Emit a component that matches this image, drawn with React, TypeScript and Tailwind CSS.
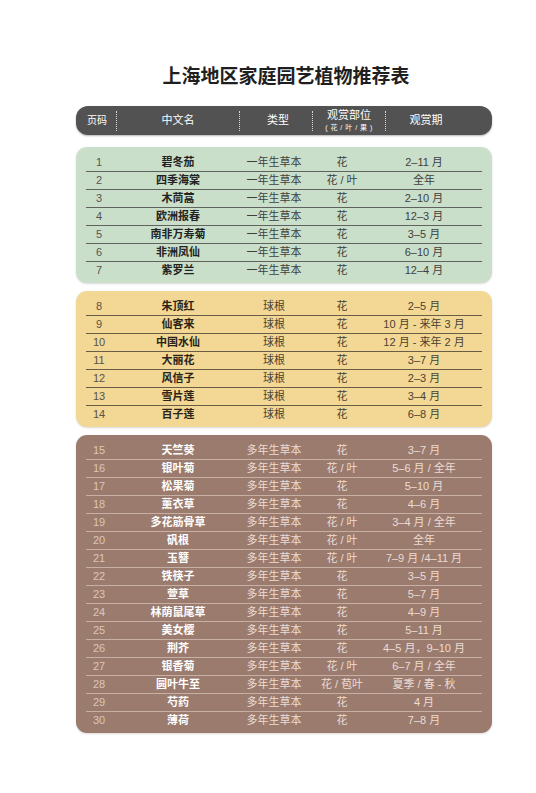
import React from "react";

type Row = [string, string, string, string, string];

const annuals: Row[] = [
  ["1", "碧冬茄", "一年生草本", "花", "2–11 月"],
  ["2", "四季海棠", "一年生草本", "花 / 叶", "全年"],
  ["3", "木茼蒿", "一年生草本", "花", "2–10 月"],
  ["4", "欧洲报春", "一年生草本", "花", "12–3 月"],
  ["5", "南非万寿菊", "一年生草本", "花", "3–5 月"],
  ["6", "非洲凤仙", "一年生草本", "花", "6–10 月"],
  ["7", "紫罗兰", "一年生草本", "花", "12–4 月"],
];

const bulbs: Row[] = [
  ["8", "朱顶红", "球根", "花", "2–5 月"],
  ["9", "仙客来", "球根", "花", "10 月 - 来年 3 月"],
  ["10", "中国水仙", "球根", "花", "12 月 - 来年 2 月"],
  ["11", "大丽花", "球根", "花", "3–7 月"],
  ["12", "风信子", "球根", "花", "2–3 月"],
  ["13", "雪片莲", "球根", "花", "3–4 月"],
  ["14", "百子莲", "球根", "花", "6–8 月"],
];

const perennials: Row[] = [
  ["15", "天竺葵", "多年生草本", "花", "3–7 月"],
  ["16", "银叶菊", "多年生草本", "花 / 叶", "5–6 月 / 全年"],
  ["17", "松果菊", "多年生草本", "花", "5–10 月"],
  ["18", "薰衣草", "多年生草本", "花", "4–6 月"],
  ["19", "多花筋骨草", "多年生草本", "花 / 叶", "3–4 月 / 全年"],
  ["20", "矾根", "多年生草本", "花 / 叶", "全年"],
  ["21", "玉簪", "多年生草本", "花 / 叶", "7–9 月 /4–11 月"],
  ["22", "铁筷子", "多年生草本", "花", "3–5 月"],
  ["23", "萱草", "多年生草本", "花", "5–7 月"],
  ["24", "林荫鼠尾草", "多年生草本", "花", "4–9 月"],
  ["25", "美女樱", "多年生草本", "花", "5–11 月"],
  ["26", "荆芥", "多年生草本", "花", "4–5 月，9–10 月"],
  ["27", "银香菊", "多年生草本", "花 / 叶", "6–7 月 / 全年"],
  ["28", "圆叶牛至", "多年生草本", "花 / 苞叶", "夏季 / 春 - 秋"],
  ["29", "芍药", "多年生草本", "花", "4 月"],
  ["30", "薄荷", "多年生草本", "花", "7–8 月"],
];

function Sep() {
  return <div className="h-[20px] w-0 border-l border-dotted border-[#d8d8d8]" />;
}

function Panel({
  rows,
  bg,
  line,
  num,
  name,
  text,
}: {
  rows: Row[];
  bg: string;
  line: string;
  num: string;
  name: string;
  text: string;
}) {
  return (
    <div className={`rounded-[11px] px-[10px] pt-[6px] pb-[4px] shadow-[0_1px_2px_rgba(0,0,0,0.15)] ${bg}`}>
      {rows.map((r, i) => (
        <div
          key={r[0]}
          className={`grid h-[18px] grid-cols-[26px_132px_60px_76px_88px] items-center text-[11px] leading-none ${
            i > 0 ? `border-t ${line}` : ""
          }`}
        >
          <div className={`text-center ${num}`}>{r[0]}</div>
          <div className={`text-center font-bold ${name}`}>{r[1]}</div>
          <div className={`text-center ${text}`}>{r[2]}</div>
          <div className={`text-center ${text}`}>{r[3]}</div>
          <div className={`whitespace-nowrap text-center ${text}`}>{r[4]}</div>
        </div>
      ))}
    </div>
  );
}

export default function App() {
  return (
    <div className="min-h-[793px] bg-white font-['Liberation_Sans','Noto_Sans_CJK_SC',sans-serif]">
      <div className="ml-[76px] w-[416px] pt-[66px]">
        <h1 className="pl-[4px] text-center text-[19px] font-bold leading-[22px] text-[#1f1f1f]">
          上海地区家庭园艺植物推荐表
        </h1>

        <div className="mt-[18px] flex h-[29px] items-center rounded-[12px] bg-[#525252] pr-[26px] text-[10px] text-white shadow-[0_1px_2px_rgba(0,0,0,0.3)]">
          <div className="w-[40px] pl-[2px] text-center">页码</div>
          <Sep />
          <div className="w-[122px] text-center text-[11px]">中文名</div>
          <Sep />
          <div className="w-[72px] pl-[4px] text-center text-[11px]">类型</div>
          <Sep />
          <div className="flex w-[72px] flex-col items-center leading-none">
            <span className="text-[11px]">观赏部位</span>
            <span className="mt-[3px] text-[7px] tracking-[0.5px]">( 花 / 叶 / 果 )</span>
          </div>
          <Sep />
          <div className="flex-1 text-center text-[11px]">观赏期</div>
        </div>

        <div className="mt-[12px] flex flex-col gap-[8px]">
          <Panel
            rows={annuals}
            bg="bg-[#c9dfc9]"
            line="border-[#5f625e]"
            num="text-[#555]"
            name="text-[#222]"
            text="text-[#3f3f3f]"
          />
          <Panel
            rows={bulbs}
            bg="bg-[#f2d894]"
            line="border-[#6a5d45]"
            num="text-[#5a5245]"
            name="text-[#2a2418]"
            text="text-[#4a4232]"
          />
          <Panel
            rows={perennials}
            bg="bg-[#9b7b6e]"
            line="border-[#c9b0a5]"
            num="text-[#dcc6bc]"
            name="text-white"
            text="text-[#ecdcd4]"
          />
        </div>
      </div>
    </div>
  );
}
